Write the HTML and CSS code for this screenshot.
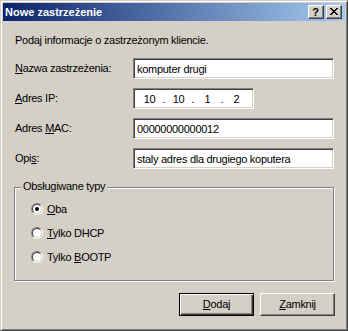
FILE: index.html
```html
<!DOCTYPE html>
<html lang="pl">
<head>
<meta charset="utf-8">
<title>Nowe zastrzeżenie</title>
<link rel="stylesheet" href="styles.css">
</head>
<body>
<div class="window">
  <div class="titlebar">
    <span class="title">Nowe zastrzeżenie</span>
    <div class="tbtns">
      <div class="tbtn help">?</div>
      <div class="tbtn close">
        <svg width="8" height="7" viewBox="0 0 8 7" shape-rendering="crispEdges">
          <path d="M0 0h2v1H0zM6 0h2v1H6zM1 1h2v1H1zM5 1h2v1H5zM2 2h4v1H2zM3 3h2v1H3zM2 4h4v1H2zM1 5h2v1H1zM5 5h2v1H5zM0 6h2v1H0zM6 6h2v1H6z" fill="#000"/>
        </svg>
      </div>
    </div>
  </div>
  <div class="client">
    <p class="intro">Podaj informacje o zastrzeżonym kliencie.</p>
    <div class="form">
      <span class="label"><u>N</u>azwa zastrzeżenia:</span>
      <input class="edit" type="text" value="komputer drugi">
      <span class="label"><u>A</u>dres IP:</span>
      <div class="edit ipbox">
        <span class="oct">10</span><span class="dot">.</span><span class="oct">10</span><span class="dot">.</span><span class="oct">1</span><span class="dot">.</span><span class="oct">2</span>
      </div>
      <span class="label">Adres <u>M</u>AC:</span>
      <input class="edit" type="text" value="00000000000012">
      <span class="label">Opi<u>s</u>:</span>
      <input class="edit" type="text" value="staly adres dla drugiego koputera">
    </div>
    <div class="group">
      <span class="legend">Obsługiwane typy</span>
      <div class="radio-row"><span class="radio checked"></span><span><u>O</u>ba</span></div>
      <div class="radio-row"><span class="radio"></span><span><u>T</u>ylko DHCP</span></div>
      <div class="radio-row"><span class="radio"></span><span>Tylko <u>B</u>OOTP</span></div>
    </div>
    <div class="buttons">
      <div class="btn default"><u>D</u>odaj</div>
      <div class="btn"><u>Z</u>amknij</div>
    </div>
  </div>
</div>
</body>
</html>
```
FILE: styles.css
```css
html, body {
  margin: 0;
  padding: 0;
  background: #d4d0c8;
}
body {
  font: 11px "Liberation Sans", Arial, sans-serif;
  letter-spacing: -0.28px;
  color: #000;
}
.window {
  width: 348px;
  height: 331px;
  box-sizing: border-box;
  border: 1px solid;
  border-color: #d4d0c8 #404040 #404040 #d4d0c8;
  box-shadow: inset 1px 1px #fff, inset -1px -1px #808080;
  padding: 2px;
  background: #d4d0c8;
  display: flex;
  flex-direction: column;
}
.titlebar {
  height: 18px;
  flex: none;
  background: linear-gradient(to right, #0a246a, #a6caf0);
  display: flex;
  align-items: center;
  padding: 0 3px 0 2px;
}
.title {
  flex: 1;
  color: #fff;
  font-weight: bold;
  letter-spacing: 0;
  line-height: 18px;
}
.tbtns {
  display: flex;
  gap: 2px;
}
.tbtn {
  width: 16px;
  height: 14px;
  box-sizing: border-box;
  background: #d4d0c8;
  border: 1px solid;
  border-color: #fff #404040 #404040 #fff;
  box-shadow: inset -1px -1px #808080;
  display: flex;
  align-items: center;
  justify-content: center;
}
.help {
  font-weight: bold;
  font-size: 11px;
  letter-spacing: 0;
  line-height: 12px;
  padding-right: 1px;
}
.close svg {
  display: block;
  margin: 0 1px 1px 0;
}
.client {
  flex: 1;
  display: flex;
  flex-direction: column;
  padding: 13px 10px 0 12px;
}
.intro {
  margin: 0 0 11px;
  line-height: 13px;
}
.form {
  display: grid;
  grid-template-columns: 118px auto;
  grid-auto-rows: 21px;
  row-gap: 9px;
  align-items: center;
}
.label {
  line-height: 13px;
}
.edit {
  width: 201px;
  height: 21px;
  box-sizing: border-box;
  margin: 0;
  border: 1px solid;
  border-color: #808080 #fff #fff #808080;
  box-shadow: inset 1px 1px #404040, inset -1px -1px #d4d0c8;
  padding: 0 0 0 3px;
  font: inherit;
  letter-spacing: inherit;
  color: #000;
  background: #fff;
  outline: none;
}
.ipbox {
  width: 121px;
  display: flex;
  align-items: center;
  padding-left: 4px;
}
.oct {
  width: 23px;
  text-align: center;
}
.dot {
  width: 6px;
  text-align: center;
}
.group {
  position: relative;
  margin: 18px 0 0 -1px;
  width: 320px;
  height: 94px;
  box-sizing: border-box;
  border: 1px solid #808080;
  box-shadow: 1px 1px 0 #fff, inset 1px 1px 0 #fff;
  padding: 15px 0 0 16px;
  display: flex;
  flex-direction: column;
  gap: 12px;
}
.legend {
  position: absolute;
  top: -8px;
  left: 6px;
  padding: 0 2px;
  line-height: 13px;
  background: #d4d0c8;
}
.radio-row {
  display: flex;
  align-items: center;
  gap: 4px;
  height: 12px;
  line-height: 13px;
}
.radio {
  width: 12px;
  height: 12px;
  box-sizing: border-box;
  border-radius: 50%;
  border: 1px solid;
  border-color: #808080 #fff #fff #808080;
  position: relative;
  flex: none;
}
.radio::before {
  content: "";
  position: absolute;
  inset: 0;
  border-radius: 50%;
  border: 1px solid;
  border-color: #404040 #d4d0c8 #d4d0c8 #404040;
  background: #fff;
}
.radio.checked::after {
  content: "";
  position: absolute;
  left: 3px;
  top: 3px;
  width: 4px;
  height: 4px;
  border-radius: 50%;
  background: #000;
}
.buttons {
  display: flex;
  justify-content: flex-end;
  gap: 6px;
  margin-top: 12px;
}
.btn {
  width: 75px;
  height: 23px;
  box-sizing: border-box;
  border: 1px solid;
  border-color: #fff #404040 #404040 #fff;
  box-shadow: inset -1px -1px #808080;
  display: flex;
  align-items: center;
  justify-content: center;
  line-height: 13px;
}
.btn.default {
  border-color: #000;
  box-shadow: inset 1px 1px #fff, inset -1px -1px #404040, inset -2px -2px #808080;
}
```
